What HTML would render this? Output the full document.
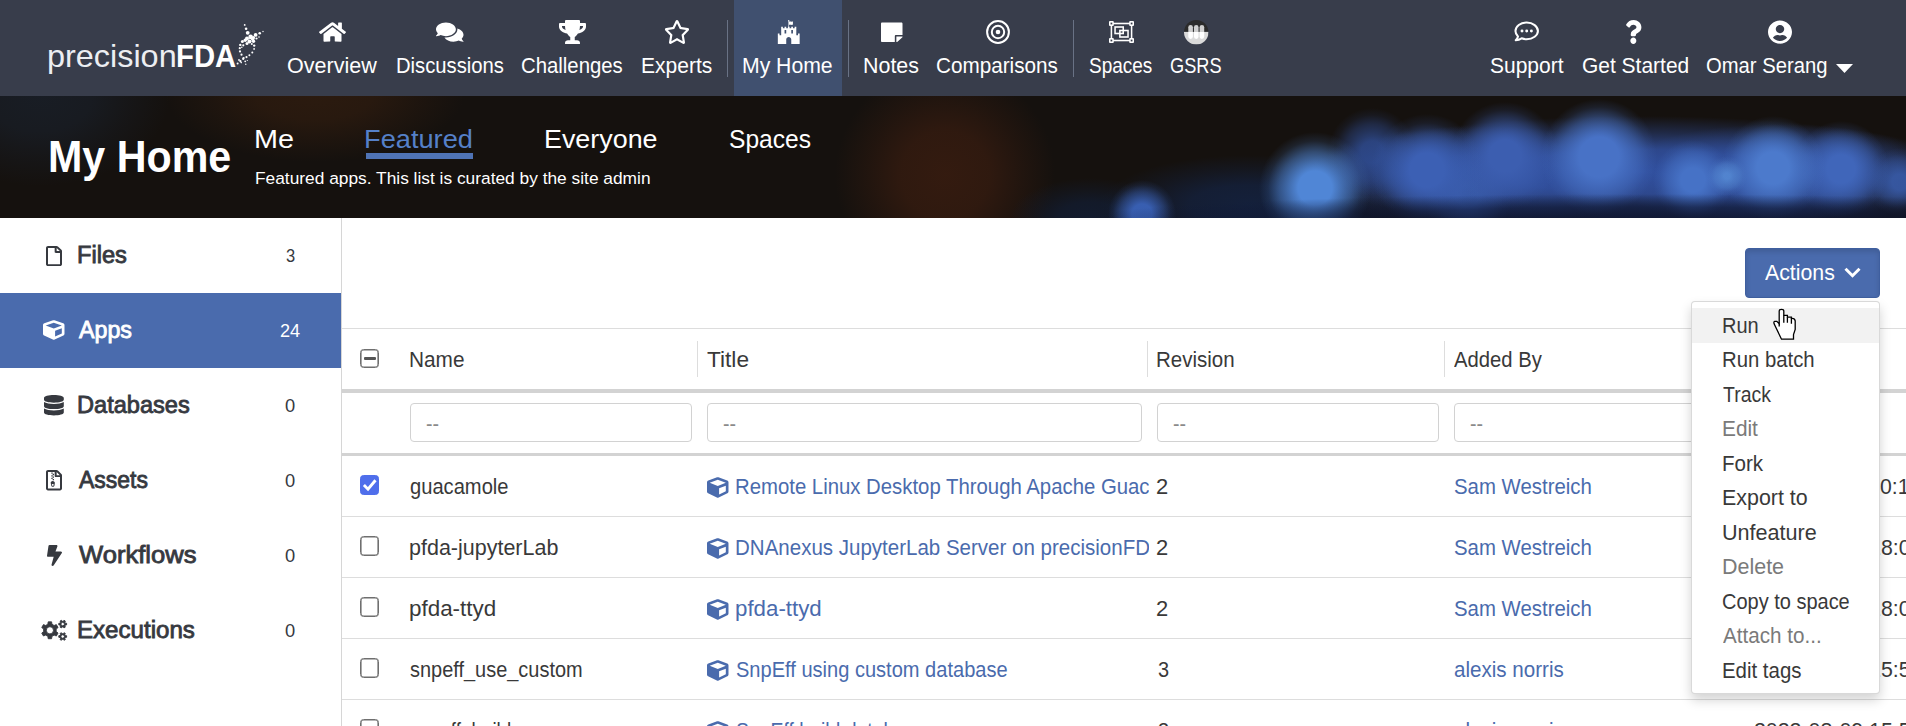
<!DOCTYPE html>
<html lang="en"><head><meta charset="utf-8"><title>My Home - precisionFDA</title>
<style>
html,body{margin:0;padding:0;}
body{width:1906px;height:726px;overflow:hidden;position:relative;background:#fff;font-family:"Liberation Sans", sans-serif;color:#393939;}
.t{position:absolute;white-space:pre;transform-origin:0 0;display:block;text-decoration:none;}
.i{position:absolute;fill:currentColor;display:block;overflow:visible;}
.abs{position:absolute;}
nav{position:absolute;left:0;top:0;width:1906px;height:96px;background:#383d4b;color:#fff;}
nav .t{color:#fff;}
nav .active{position:absolute;left:734px;top:0;width:108px;height:96px;background:#40506f;}
nav .sep{position:absolute;top:20px;width:1px;height:57px;background:#697285;}
header{position:absolute;left:0;top:96px;width:1906px;height:122px;overflow:hidden;background-color:#15110e;}
header .t{color:#fff;}
aside{position:absolute;left:0;top:218px;width:341px;height:508px;border-right:1px solid #d6d6d6;background:#fff;}
aside .cur{position:absolute;left:0;top:75px;width:341px;height:75px;background:#4a6bad;}
main{position:absolute;left:342px;top:218px;width:1564px;height:508px;background:#fff;overflow:hidden;}
.hl{position:absolute;left:0;width:1564px;background:#ddd;}
.inp{position:absolute;top:185px;height:37px;border:1px solid #d2d2d2;border-radius:4px;background:#fff;}
.vsep{position:absolute;top:123px;width:1px;height:36px;background:#ddd;}
.cb{position:absolute;left:18px;box-sizing:border-box;width:19.400px;height:19.400px;border:1px solid #6f6f6f;box-shadow:inset 0 0 0 .6px #6f6f6f;border-radius:3.500px;background:#fff;}
.btn{position:absolute;left:1403px;top:30px;width:133px;height:48px;border:1px solid #3f5f9f;border-radius:4px;background:#4a6bad;box-shadow:inset 0 3px 5px rgba(0,0,0,.125);}
.menu{position:absolute;left:1349px;top:83px;width:187px;height:391px;margin:0;padding:0;list-style:none;background:#fff;border:1px solid rgba(0,0,0,.15);border-radius:4px;box-shadow:0 6px 12px rgba(0,0,0,.175);}
.menu .hov{position:absolute;left:0;top:6px;width:187px;height:35px;background:#f2f2f2;}
</style></head><body>

<nav>
<div class="active"></div>
<div class="sep" style="left:727px"></div>
<div class="sep" style="left:848px"></div>
<div class="sep" style="left:1073px"></div>
<span class="t" style="left:46.74px;top:41.4px;font-size:30.5px;line-height:30.5px;transform:scaleX(1.0622);font-weight:400;color:#eceef2;">precision</span>
<span class="t" style="left:176.08px;top:41.4px;font-size:30.5px;line-height:30.5px;transform:scaleX(0.9595);font-weight:700;color:#fff;">FDA</span>
<svg class="i" style="left:230px;top:20px;width:40px;height:50px;color:#fff" viewBox="0 0 40 50"><circle cx="14.7" cy="4.9" r="0.9"/><circle cx="16.1" cy="8.7" r="1.3"/><circle cx="17.7" cy="12.8" r="1.9"/><circle cx="20.6" cy="16.9" r="2.3"/><circle cx="23.5" cy="21.2" r="1.7"/><circle cx="24.2" cy="25.6" r="1.2"/><circle cx="24.1" cy="28.9" r="0.9"/><circle cx="22.3" cy="32.6" r="1.0"/><circle cx="19.4" cy="35.3" r="1.0"/><circle cx="16.5" cy="37.1" r="1.1"/><circle cx="13.2" cy="38.9" r="1.1"/><circle cx="10.4" cy="41.2" r="1.1"/><circle cx="7.6" cy="43.4" r="1.0"/><circle cx="33.0" cy="11.5" r="0.7"/><circle cx="29.7" cy="13.2" r="1.3"/><circle cx="25.6" cy="14.9" r="1.9"/><circle cx="23.3" cy="17.7" r="1.8"/><circle cx="17.0" cy="18.4" r="2.0"/><circle cx="15.2" cy="20.3" r="1.7"/><circle cx="12.4" cy="21.6" r="1.5"/><circle cx="10.3" cy="24.9" r="1.2"/><circle cx="9.8" cy="28.2" r="1.1"/><circle cx="10.0" cy="31.4" r="1.1"/><circle cx="11.5" cy="34.7" r="1.1"/><circle cx="13.6" cy="38.0" r="1.1"/><circle cx="15.2" cy="41.3" r="0.9"/><circle cx="15.8" cy="44.3" r="0.7"/><circle cx="19.5" cy="21.5" r="2.0"/><circle cx="17.0" cy="23.5" r="1.5"/><circle cx="22.6" cy="19.2" r="1.6"/><circle cx="26.5" cy="18.5" r="1.1"/><circle cx="29.0" cy="17.0" r="0.8"/><circle cx="13.3" cy="25.3" r="1.1"/><circle cx="11.8" cy="27.3" r="0.8"/><circle cx="9.0" cy="40.0" r="0.9"/><circle cx="11.2" cy="42.6" r="0.8"/><circle cx="17.3" cy="40.5" r="0.6"/><circle cx="21.8" cy="24.0" r="1.0"/></svg>
<svg class="i" style="left:319px;top:21px;width:27px;height:22px;color:#fff;" viewBox="0 0 576 512" preserveAspectRatio="none"><path d="M280.37 148.26L96 300.11V464a16 16 0 0 0 16 16l112.06-.29a16 16 0 0 0 15.92-16V368a16 16 0 0 1 16-16h64a16 16 0 0 1 16 16v95.64a16 16 0 0 0 16 16.05L464 480a16 16 0 0 0 16-16V300L295.67 148.26a12.19 12.19 0 0 0-15.3 0zM571.6 251.47L488 182.56V44.05a12 12 0 0 0-12-12h-56a12 12 0 0 0-12 12v72.61L318.47 43a48 48 0 0 0-61 0L4.34 251.47a12 12 0 0 0-1.6 16.9l25.5 31A12 12 0 0 0 45.15 301l235.22-193.74a12.19 12.19 0 0 1 15.3 0L530.9 301a12 12 0 0 0 16.9-1.6l25.5-31a12 12 0 0 0-1.7-16.93z"/></svg>
<a class="t" style="left:287.39px;top:55.9px;font-size:21.3px;line-height:21.3px;transform:scaleX(1.0116);font-weight:400;color:#fff;">Overview</a>
<svg class="i" style="left:435.7px;top:21px;width:27.5px;height:22px;color:#fff;" viewBox="0 0 576 512" preserveAspectRatio="none"><path d="M416 192c0-88.4-93.1-160-208-160S0 103.6 0 192c0 34.3 14.1 65.9 38 92-13.4 30.2-35.5 54.2-35.8 54.5-2.2 2.3-2.8 5.7-1.5 8.700S4.800 352 8 352c36.600 0 66.900-12.300 88.700-25 32.200 15.700 70.300 25 111.300 25 114.900 0 208-71.600 208-160zm122 220c23.900-26 38-57.700 38-92 0-66.900-53.500-124.200-129.300-148.100.900 6.600 1.300 13.300 1.300 20.100 0 105.900-107.700 192-240 192-10.800 0-21.300-.800-31.700-1.900C207.800 439.600 281.800 480 368 480c41 0 79.100-9.200 111.300-25 21.800 12.700 52.100 25 88.700 25 3.200 0 6.100-1.900 7.300-4.800 1.300-2.900.700-6.300-1.500-8.700-.300-.300-22.400-24.200-35.800-54.500z"/></svg>
<a class="t" style="left:395.95px;top:55.9px;font-size:21.3px;line-height:21.3px;transform:scaleX(0.9503);font-weight:400;color:#fff;">Discussions</a>
<svg class="i" style="left:559px;top:20px;width:27px;height:24px;color:#fff;" viewBox="0 0 576 512" preserveAspectRatio="none"><path d="M552 64H448V24c0-13.300-10.700-24-24-24H152c-13.300 0-24 10.700-24 24v40H24C10.700 64 0 74.700 0 88v56c0 35.700 22.500 72.400 61.900 100.700 31.500 22.700 69.800 37.100 110 41.700C203.300 338.500 240 360 240 360v72h-48c-35.300 0-64 20.700-64 56v12c0 6.600 5.400 12 12 12h296c6.600 0 12-5.400 12-12v-12c0-35.300-28.700-56-64-56h-48v-72s36.700-21.500 68.100-73.600c40.300-4.600 78.600-19 110-41.700 39.300-28.300 61.900-65 61.900-100.700V88c0-13.300-10.700-24-24-24zM99.300 192.800C74.900 175.200 64 155.600 64 144v-16h64.200c1 32.600 5.800 61.200 12.800 86.200-15.100-5.200-29.200-12.400-41.700-21.400zM512 144c0 16.100-17.700 36.100-35.300 48.800-12.500 9-26.700 16.200-41.800 21.400 7-25 11.800-53.600 12.800-86.200H512v16z"/></svg>
<a class="t" style="left:521.34px;top:55.9px;font-size:21.3px;line-height:21.3px;transform:scaleX(0.9551);font-weight:400;color:#fff;">Challenges</a>
<svg class="i" style="left:663.5px;top:20px;width:26px;height:24px;color:#fff;" viewBox="0 0 576 512" preserveAspectRatio="none"><path d="M528.1 171.500L382 150.200 316.700 17.800c-11.700-23.600-45.600-23.900-57.400 0L194 150.200 47.900 171.500c-26.200 3.800-36.700 36.100-17.700 54.600l105.700 103-25 145.500c-4.500 26.300 23.200 46 46.400 33.700L288 439.600l130.700 68.700c23.200 12.200 50.900-7.400 46.400-33.700l-25-145.500 105.700-103c19-18.500 8.500-50.800-17.700-54.600zM388.600 312.300l23.700 138.400L288 385.400l-124.300 65.300 23.700-138.400-100.600-98 139-20.200 62.200-126 62.200 126 139 20.200-100.600 98z"/></svg>
<a class="t" style="left:640.61px;top:55.9px;font-size:21.3px;line-height:21.3px;transform:scaleX(0.9865);font-weight:400;color:#fff;">Experts</a>
<svg class="i" style="left:776.5px;top:20px;width:23.5px;height:24px;color:#fff;" viewBox="0 0 512 512" preserveAspectRatio="none"><path d="M489.200 287.900h-27.400c-2.600 0-4.600 2-4.600 4.600v32h-36.600V146.200c0-2.600-2-4.600-4.600-4.600h-27.400c-2.600 0-4.600 2-4.600 4.600v32h-36.600v-32c0-2.600-2-4.600-4.600-4.600h-27.400c-2.600 0-4.600 2-4.600 4.600v32h-36.600v-32c0-6-8-4.600-11.700-4.600v-38c8.300-2 17.100-3.400 25.700-3.400 10.900 0 20.900 4.300 31.400 4.300 4.600 0 27.700-1.100 27.700-8v-60c0-2.600-2-4.600-4.600-4.600-5.100 0-15.100 4.300-24 4.300-9.700 0-20.900-4.300-32.600-4.300-8 0-16 1.100-23.700 2.900v-4.900c5.400-2.600 9.100-8.300 9.100-14.300 0-20.700-31.400-20.800-31.400 0 0 6 3.700 11.700 9.100 14.300v111.700c-3.700 0-11.700-1.400-11.700 4.600v32h-36.600v-32c0-2.600-2-4.600-4.600-4.600h-27.400c-2.600 0-4.600 2-4.600 4.600v32H128v-32c0-2.600-2-4.600-4.600-4.600H96c-2.600 0-4.600 2-4.600 4.600v178.300H54.800v-32c0-2.600-2-4.600-4.600-4.600H22.800c-2.600 0-4.600 2-4.600 4.600V512h182.900v-96c0-72.600 109.700-72.600 109.700 0v96h182.900V292.500c.1-2.600-1.900-4.600-4.500-4.600zm-288.100-4.500c0 2.600-2 4.600-4.600 4.600h-27.400c-2.600 0-4.600-2-4.600-4.600v-64c0-2.600 2-4.600 4.600-4.600h27.400c2.600 0 4.600 2 4.600 4.600v64zm146.400 0c0 2.600-2 4.600-4.600 4.600h-27.400c-2.600 0-4.600-2-4.600-4.600v-64c0-2.600 2-4.600 4.600-4.600h27.400c2.600 0 4.600 2 4.600 4.600v64z"/></svg>
<a class="t" style="left:742.41px;top:55.9px;font-size:21.3px;line-height:21.3px;transform:scaleX(0.9947);font-weight:400;color:#fff;">My Home</a>
<svg class="i" style="left:881px;top:21px;width:21.5px;height:22.5px;color:#fff;" viewBox="0 0 448 512" preserveAspectRatio="none"><path d="M312 320h136V56c0-13.300-10.700-24-24-24H24C10.700 32 0 42.700 0 56v400c0 13.300 10.700 24 24 24h264V344c0-13.200 10.800-24 24-24zm129 55l-98 98c-4.500 4.500-10.600 7-17 7h-6V352h128v6.100c0 6.300-2.500 12.400-7 16.900z"/></svg>
<a class="t" style="left:863.29px;top:55.9px;font-size:21.3px;line-height:21.3px;transform:scaleX(1.0058);font-weight:400;color:#fff;">Notes</a>
<svg class="i" style="left:985.5px;top:19.8px;width:24px;height:24px;color:#fff;" viewBox="0 0 24 24" preserveAspectRatio="none"><circle cx="12" cy="12" r="10.9" fill="none" stroke="currentColor" stroke-width="2"/><circle cx="12" cy="12" r="6.2" fill="none" stroke="currentColor" stroke-width="2"/><circle cx="12" cy="12" r="2.3"/></svg>
<a class="t" style="left:936.33px;top:55.9px;font-size:21.3px;line-height:21.3px;transform:scaleX(0.9716);font-weight:400;color:#fff;">Comparisons</a>
<svg class="i" style="left:1108.5px;top:21px;width:25px;height:22px;color:#fff;" viewBox="0 0 26 22" preserveAspectRatio="none"><g fill="none" stroke="currentColor" stroke-width="1.6"><rect x="2.5" y="2.5" width="21" height="17"/><rect x="6.3" y="6" width="8.5" height="6.5"/><rect x="11.3" y="9.500" width="8.500" height="6.500"/></g><g fill="currentColor"><rect x="0" y="0" width="5" height="5" rx="1"/><rect x="21" y="0" width="5" height="5" rx="1"/><rect x="0" y="17" width="5" height="5" rx="1"/><rect x="21" y="17" width="5" height="5" rx="1"/></g><g fill="#383d4b"><rect x="1.600" y="1.600" width="1.800" height="1.800"/><rect x="22.600" y="1.600" width="1.800" height="1.800"/><rect x="1.600" y="18.600" width="1.800" height="1.800"/><rect x="22.600" y="18.600" width="1.800" height="1.800"/></g></svg>
<a class="t" style="left:1089.30px;top:55.9px;font-size:21.3px;line-height:21.3px;transform:scaleX(0.8908);font-weight:400;color:#fff;">Spaces</a>
<svg class="i" style="left:1183.7px;top:19.7px;width:24.5px;height:24.5px;color:#fff;" viewBox="0 0 24.5 24.5" preserveAspectRatio="none"><defs><clipPath id="gc"><circle cx="12.25" cy="12.25" r="12.25"/></clipPath><clipPath id="gt"><rect x="0" y="0" width="24.5" height="11.9"/></clipPath><clipPath id="gb"><rect x="0" y="11.9" width="24.5" height="12.6"/></clipPath></defs><g clip-path="url(#gc)"><rect x="0" y="0" width="24.5" height="11.9" fill="#2b2b2b"/><rect x="0" y="11.9" width="24.5" height="12.6" fill="#dadada"/><g fill="#d0d0d0" clip-path="url(#gt)"><rect x="4.3" y="4.900" width="4.600" height="14" rx="2.300"/><rect x="9.950" y="4.900" width="4.600" height="14" rx="2.300"/><rect x="15.600" y="4.900" width="4.600" height="14" rx="2.300"/></g><g fill="#fff" clip-path="url(#gb)"><rect x="4.300" y="4.900" width="4.600" height="14" rx="2.300"/><rect x="9.950" y="4.900" width="4.600" height="14" rx="2.300"/><rect x="15.600" y="4.900" width="4.600" height="14" rx="2.300"/></g></g></svg>
<a class="t" style="left:1169.85px;top:55.9px;font-size:21.3px;line-height:21.3px;transform:scaleX(0.8538);font-weight:400;color:#fff;">GSRS</a>
<svg class="i" style="left:1514.3px;top:21.3px;width:25.4px;height:21.5px;color:#fff;" viewBox="0 0 26 22" preserveAspectRatio="none"><path d="M13 1.500C6.600 1.500 1.500 5.400 1.500 10.300c0 2.100 1 4 2.600 5.500-.4 1.600-1.400 3-2.300 3.900 2.300 0 4.500-.9 6-2 1.600.6 3.300.9 5.200.9 6.400 0 11.500-3.900 11.500-8.300S19.400 1.500 13 1.500z" fill="none" stroke="currentColor" stroke-width="2.100" stroke-linejoin="round"/><circle cx="8.200" cy="10.300" r="1.500"/><circle cx="13" cy="10.300" r="1.500"/><circle cx="17.800" cy="10.300" r="1.500"/></svg>
<a class="t" style="left:1490.40px;top:55.9px;font-size:21.3px;line-height:21.3px;transform:scaleX(0.9856);font-weight:400;color:#fff;">Support</a>
<svg class="i" style="left:1625.3px;top:20.4px;width:16.7px;height:24px;color:#fff;" viewBox="0 0 384 512" preserveAspectRatio="none"><path d="M202.021 0C122.202 0 70.503 32.703 29.914 91.026c-7.363 10.580-5.093 25.086 5.178 32.874l43.138 32.709c10.373 7.865 25.132 6.026 33.253-4.148 25.049-31.381 43.630-49.449 82.757-49.449 30.764 0 68.816 19.799 68.816 49.631 0 22.552-18.617 34.134-48.993 51.164-35.423 19.860-82.299 44.576-82.299 106.405V320c0 13.255 10.745 24 24 24h72.471c13.255 0 24-10.745 24-24v-5.773c0-42.860 125.268-44.645 125.268-160.627C377.504 66.256 286.902 0 202.021 0zM192 373.459c-38.196 0-69.271 31.075-69.271 69.271 0 38.195 31.075 69.270 69.271 69.270s69.271-31.075 69.271-69.271-31.075-69.270-69.271-69.270z"/></svg>
<a class="t" style="left:1581.92px;top:55.9px;font-size:21.3px;line-height:21.3px;transform:scaleX(0.9845);font-weight:400;color:#fff;">Get Started</a>
<svg class="i" style="left:1768px;top:20.4px;width:24px;height:24px;color:#fff;" viewBox="0 0 496 512" preserveAspectRatio="none"><path d="M248 8C111 8 0 119 0 256s111 248 248 248 248-111 248-248S385 8 248 8zm0 96c48.600 0 88 39.400 88 88s-39.400 88-88 88-88-39.400-88-88 39.400-88 88-88zm0 344c-58.700 0-111.300-26.600-146.500-68.200 18.800-35.400 55.600-59.800 98.500-59.800 2.400 0 4.800.400 7.100 1.100 13 4.200 26.600 6.900 40.900 6.900 14.300 0 28-2.700 40.900-6.900 2.300-.700 4.700-1.100 7.100-1.100 42.900 0 79.700 24.400 98.500 59.800C359.300 421.400 306.700 448 248 448z"/></svg>
<a class="t" style="left:1706.35px;top:55.9px;font-size:21.3px;line-height:21.3px;transform:scaleX(0.9501);font-weight:400;color:#fff;">Omar Serang</a>
<svg class="i" style="left:1836px;top:63.500px;width:17px;height:9px;color:#fff" viewBox="0 0 17 9"><path d="M0 0h17L8.500 9z"/></svg>
</nav>
<header>
<div class="abs" id="bokeh" style="left:0;top:0;width:1906px;height:122px;background:radial-gradient(ellipse 560px 26px at 1640px 124px, rgba(14,24,56,.75) 0, rgba(14,24,56,.6) 50%, rgba(14,24,56,0) 100%),radial-gradient(circle at 1727px 80px, rgba(88,142,216,0.8) 0, rgba(88,142,216,0.8) 3px, rgba(88,142,216,0.40) 12px, rgba(88,142,216,0.12) 16px, rgba(88,142,216,0) 20px),radial-gradient(circle at 1315px 92px, rgba(80,134,214,1) 0, rgba(80,134,214,1) 17px, rgba(80,134,214,0.50) 36px, rgba(80,134,214,0.15) 47px, rgba(80,134,214,0) 56px),radial-gradient(circle at 1599px 61px, rgba(72,114,198,1) 0, rgba(72,114,198,1) 20px, rgba(72,114,198,0.50) 39px, rgba(72,114,198,0.15) 50px, rgba(72,114,198,0) 58px),radial-gradient(circle at 1773px 72px, rgba(76,122,204,1) 0, rgba(76,122,204,1) 16px, rgba(76,122,204,0.50) 34px, rgba(76,122,204,0.15) 44px, rgba(76,122,204,0) 52px),radial-gradient(circle at 1693px 84px, rgba(70,114,198,1) 0, rgba(70,114,198,1) 12px, rgba(70,114,198,0.50) 26px, rgba(70,114,198,0.15) 34px, rgba(70,114,198,0) 40px),radial-gradient(circle at 1841px 73px, rgba(64,102,186,1) 0, rgba(64,102,186,1) 14px, rgba(64,102,186,0.50) 31px, rgba(64,102,186,0.15) 41px, rgba(64,102,186,0) 48px),radial-gradient(circle at 1900px 86px, rgba(56,90,166,0.9) 0, rgba(56,90,166,0.9) 8px, rgba(56,90,166,0.45) 21px, rgba(56,90,166,0.14) 28px, rgba(56,90,166,0) 34px),radial-gradient(circle at 1427px 74px, rgba(60,96,180,1) 0, rgba(60,96,180,1) 17px, rgba(60,96,180,0.50) 36px, rgba(60,96,180,0.15) 47px, rgba(60,96,180,0) 56px),radial-gradient(circle at 1505px 60px, rgba(60,94,176,1) 0, rgba(60,94,176,1) 16px, rgba(60,94,176,0.50) 35px, rgba(60,94,176,0.15) 46px, rgba(60,94,176,0) 54px),radial-gradient(circle at 1468px 100px, rgba(56,90,168,0.9) 0, rgba(56,90,168,0.9) 11px, rgba(56,90,168,0.45) 28px, rgba(56,90,168,0.14) 37px, rgba(56,90,168,0) 44px),radial-gradient(circle at 1372px 56px, rgba(48,78,150,0.8) 0, rgba(48,78,150,0.8) 11px, rgba(48,78,150,0.40) 28px, rgba(48,78,150,0.12) 37px, rgba(48,78,150,0) 44px),radial-gradient(circle at 1142px 118px, rgba(58,98,184,0.95) 0, rgba(58,98,184,0.95) 10px, rgba(58,98,184,0.47) 22px, rgba(58,98,184,0.14) 29px, rgba(58,98,184,0) 34px),radial-gradient(ellipse 330px 56px at 1640px 76px, rgba(50,82,164,0.95) 0, rgba(50,82,164,0.81) 40%, rgba(50,82,164,0.38) 70%, rgba(50,82,164,0) 100%),radial-gradient(ellipse 180px 50px at 1480px 80px, rgba(48,80,160,0.8) 0, rgba(48,80,160,0.68) 40%, rgba(48,80,160,0.32) 70%, rgba(48,80,160,0) 100%),radial-gradient(ellipse 170px 52px at 1780px 80px, rgba(52,86,170,0.8) 0, rgba(52,86,170,0.68) 40%, rgba(52,86,170,0.32) 70%, rgba(52,86,170,0) 100%),radial-gradient(ellipse 150px 50px at 1250px 109px, rgba(20,34,64,0.9) 0, rgba(20,34,64,0.77) 40%, rgba(20,34,64,0.36) 70%, rgba(20,34,64,0) 100%),radial-gradient(ellipse 80px 40px at 1090px 122px, rgba(18,30,54,0.8) 0, rgba(18,30,54,0.68) 40%, rgba(18,30,54,0.32) 70%, rgba(18,30,54,0) 100%),radial-gradient(ellipse 110px 110px at 945px 79px, rgba(62,30,16,0.75) 0, rgba(62,30,16,0.64) 40%, rgba(62,30,16,0.30) 70%, rgba(62,30,16,0) 100%),radial-gradient(ellipse 130px 90px at 40px 0px, rgba(26,34,46,0.7) 0, rgba(26,34,46,0.59) 40%, rgba(26,34,46,0.28) 70%, rgba(26,34,46,0) 100%),radial-gradient(ellipse 150px 70px at 315px -4px, rgba(66,36,16,0.5) 0, rgba(66,36,16,0.42) 40%, rgba(66,36,16,0.20) 70%, rgba(66,36,16,0) 100%);"></div>
<h1 class="t" style="left:48.01px;top:40.4px;font-size:43.6px;line-height:43.6px;transform:scaleX(0.9457);font-weight:700;color:#fff;margin:0;">My Home</h1>
<a class="t" style="left:254.13px;top:30.3px;font-size:26.6px;line-height:26.6px;transform:scaleX(1.0834);font-weight:400;color:#fff;">Me</a>
<a class="t" style="left:364.35px;top:30.3px;font-size:26.6px;line-height:26.6px;transform:scaleX(1.0236);font-weight:400;color:#5580c8;">Featured</a>
<div class="abs" style="left:366px;top:57px;width:107px;height:6px;background:#4f73b5"></div>
<a class="t" style="left:543.88px;top:30.3px;font-size:26.6px;line-height:26.6px;transform:scaleX(1.0104);font-weight:400;color:#fff;">Everyone</a>
<a class="t" style="left:728.68px;top:30.3px;font-size:26.6px;line-height:26.6px;transform:scaleX(0.9244);font-weight:400;color:#fff;">Spaces</a>
<span class="t" style="left:254.99px;top:74.4px;font-size:17.2px;line-height:17.2px;transform:scaleX(1.0082);font-weight:400;color:#fff;">Featured apps. This list is curated by the site admin</span>
</header>
<aside>
<div class="cur"></div>
<svg class="i" style="left:46px;top:27.5px;width:16px;height:20px;color:#36393f;" viewBox="0 0 384 512" preserveAspectRatio="none"><path d="M369.900 97.900L286 14C277 5 264.800-.1 252.100-.1H48C21.500 0 0 21.500 0 48v416c0 26.500 21.500 48 48 48h288c26.500 0 48-21.500 48-48V131.900c0-12.700-5.100-25-14.100-34zM332.100 128H256V51.900l76.100 76.100zM48 464V48h160v104c0 13.300 10.700 24 24 24h104v288H48z"/></svg>
<a class="t" style="left:77.36px;top:24.9px;font-size:24.4px;line-height:24.4px;transform:scaleX(0.9695);font-weight:400;color:#36393f;-webkit-text-stroke:0.85px currentColor;">Files</a>
<span class="t" style="left:285.60px;top:30.0px;font-size:17.8px;line-height:17.8px;transform:scaleX(0.9300);font-weight:400;color:#36393f;">3</span>
<svg class="i" style="left:43.2px;top:102px;width:21.5px;height:20px;color:#fff;" viewBox="0 0 512 512" preserveAspectRatio="none"><path d="M239.100 6.300l-208 78c-18.700 7-31.100 25-31.100 45v225.100c0 18.200 10.300 34.800 26.500 42.900l208 104c13.500 6.800 29.400 6.800 42.900 0l208-104c16.300-8.100 26.500-24.800 26.500-42.900V129.300c0-20-12.400-37.900-31.100-44.900l-208-78C262 2.200 250 2.200 239.100 6.300zM256 68.400l192 72v1.100l-192 78-192-78v-1.100l192-72zm32 356V275.500l160-65v133.900l-160 80z"/></svg>
<a class="t" style="left:79.30px;top:99.9px;font-size:24.4px;line-height:24.4px;transform:scaleX(0.9531);font-weight:400;color:#fff;-webkit-text-stroke:0.85px currentColor;">Apps</a>
<span class="t" style="left:280.10px;top:105.0px;font-size:17.8px;line-height:17.8px;transform:scaleX(1.0207);font-weight:400;color:#fff;">24</span>
<svg class="i" style="left:43.8px;top:177px;width:19.8px;height:20.5px;color:#36393f;" viewBox="0 0 448 512" preserveAspectRatio="none"><path d="M448 73.143v45.714C448 159.143 347.667 192 224 192S0 159.143 0 118.857V73.143C0 32.857 100.333 0 224 0s224 32.857 224 73.143zM448 176v102.857C448 319.143 347.667 352 224 352S0 319.143 0 278.857V176c48.125 33.143 136.208 48.572 224 48.572S399.874 209.143 448 176zm0 160v102.857C448 479.143 347.667 512 224 512S0 479.143 0 438.857V336c48.125 33.143 136.208 48.572 224 48.572S399.874 369.143 448 336z"/></svg>
<a class="t" style="left:77.37px;top:174.9px;font-size:24.4px;line-height:24.4px;transform:scaleX(0.9667);font-weight:400;color:#36393f;-webkit-text-stroke:0.85px currentColor;">Databases</a>
<span class="t" style="left:285.00px;top:180.0px;font-size:17.8px;line-height:17.8px;transform:scaleX(1.0300);font-weight:400;color:#36393f;">0</span>
<svg class="i" style="left:46px;top:252px;width:16px;height:20.5px;color:#36393f;" viewBox="0 0 384 512" preserveAspectRatio="none"><path d="M369.900 97.900L286 14C277 5 264.800-.1 252.100-.1H48C21.500 0 0 21.500 0 48v416c0 26.500 21.500 48 48 48h288c26.500 0 48-21.500 48-48V131.900c0-12.700-5.100-25-14.100-34zM332.100 128H256V51.900l76.100 76.100zM48 464V48h160v104c0 13.300 10.700 24 24 24h104v288H48z"/><path d="M128 64h32v32h-32zM160 96h32v32h-32zM128 128h32v32h-32zM160 160h32v32h-32zM128 192h32v32h-32zM160 224h32v32h-32z"/><path d="M160 272c-30 0-52 26-46 55l10 60c4 20 20 33 40 33s36-13 40-33l8-60c5-29-20-55-52-55zm2 120c-13 0-24-9-24-20s11-20 24-20 24 9 24 20-11 20-24 20z"/></svg>
<a class="t" style="left:79.30px;top:249.9px;font-size:24.4px;line-height:24.4px;transform:scaleX(0.9411);font-weight:400;color:#36393f;-webkit-text-stroke:0.85px currentColor;">Assets</a>
<span class="t" style="left:285.00px;top:255.0px;font-size:17.8px;line-height:17.8px;transform:scaleX(1.0300);font-weight:400;color:#36393f;">0</span>
<svg class="i" style="left:46.5px;top:327px;width:15px;height:21px;color:#36393f;" viewBox="0 0 320 512" preserveAspectRatio="none"><path d="M296 160H180.600l42.600-129.800C227.200 15 215.700 0 200 0H56C44 0 33.800 8.900 32.200 20.800l-32 240C-1.700 275.200 9.500 288 24 288h118.700L96.600 482.500c-3.600 15.200 8 29.500 23.300 29.500 8.400 0 16.400-4.400 20.800-12l176-304c9.300-15.900-2.200-36-20.700-36z"/></svg>
<a class="t" style="left:79.30px;top:324.9px;font-size:24.4px;line-height:24.4px;transform:scaleX(1.0480);font-weight:400;color:#36393f;-webkit-text-stroke:0.85px currentColor;">Workflows</a>
<span class="t" style="left:285.00px;top:330.0px;font-size:17.8px;line-height:17.8px;transform:scaleX(1.0300);font-weight:400;color:#36393f;">0</span>
<svg class="i" style="left:40.5px;top:402px;width:27px;height:20.5px;color:#36393f;" viewBox="0 0 27 20.5" preserveAspectRatio="none"><path fill-rule="evenodd" stroke="currentColor" stroke-width="0.9" stroke-linejoin="round" d="M6.86 4.23 L7.20 1.87 L10.60 1.87 L10.94 4.23 L13.13 5.50 L15.35 4.61 L17.05 7.56 L15.17 9.03 L15.17 11.57 L17.05 13.04 L15.35 15.99 L13.13 15.10 L10.94 16.37 L10.60 18.73 L7.20 18.73 L6.86 16.37 L4.67 15.10 L2.45 15.99 L0.75 13.04 L2.63 11.57 L2.63 9.03 L0.75 7.56 L2.45 4.61 L4.67 5.50Z M12.50 10.30 A3.6 3.6 0 1 0 5.30 10.30 A3.6 3.6 0 1 0 12.50 10.30Z M24.40 3.19 L25.62 3.31 L25.62 4.89 L24.40 5.01 L23.84 5.98 L24.35 7.10 L22.98 7.89 L22.26 6.89 L21.14 6.89 L20.42 7.89 L19.05 7.10 L19.56 5.98 L19.00 5.01 L17.78 4.89 L17.78 3.31 L19.00 3.19 L19.56 2.22 L19.05 1.10 L20.42 0.31 L21.14 1.31 L22.26 1.31 L22.98 0.31 L24.35 1.10 L23.84 2.22Z M23.45 4.10 A1.75 1.75 0 1 0 19.95 4.10 A1.75 1.75 0 1 0 23.45 4.10Z M24.40 15.59 L25.62 15.71 L25.62 17.29 L24.40 17.41 L23.84 18.38 L24.35 19.50 L22.98 20.29 L22.26 19.29 L21.14 19.29 L20.42 20.29 L19.05 19.50 L19.56 18.38 L19.00 17.41 L17.78 17.29 L17.78 15.71 L19.00 15.59 L19.56 14.62 L19.05 13.50 L20.42 12.71 L21.14 13.71 L22.26 13.71 L22.98 12.71 L24.35 13.50 L23.84 14.62Z M23.45 16.50 A1.75 1.75 0 1 0 19.95 16.50 A1.75 1.75 0 1 0 23.45 16.50Z"/></svg>
<a class="t" style="left:77.32px;top:399.9px;font-size:24.4px;line-height:24.4px;transform:scaleX(0.9879);font-weight:400;color:#36393f;-webkit-text-stroke:0.85px currentColor;">Executions</a>
<span class="t" style="left:285.00px;top:405.0px;font-size:17.8px;line-height:17.8px;transform:scaleX(1.0300);font-weight:400;color:#36393f;">0</span>
</aside>
<main>
<div class="hl" style="top:110px;height:1px"></div>
<div class="hl" style="top:171px;height:4px;background:#d3d3d3"></div>
<div class="hl" style="top:235px;height:3px;background:#d3d3d3"></div>
<div class="hl" style="top:298px;height:1px"></div>
<div class="hl" style="top:359px;height:1px"></div>
<div class="hl" style="top:420px;height:1px"></div>
<div class="hl" style="top:481px;height:1px"></div>
<div class="cb" style="top:130.5px;left:18px"><div class="abs" style="left:2.800px;top:7.200px;width:12px;height:3px;border-radius:1px;background:#555"></div></div>
<span class="t" style="left:67.32px;top:132.0px;font-size:21.3px;line-height:21.3px;transform:scaleX(0.9770);font-weight:400;">Name</span>
<span class="t" style="left:364.90px;top:132.0px;font-size:21.3px;line-height:21.3px;transform:scaleX(1.0648);font-weight:400;">Title</span>
<span class="t" style="left:814.44px;top:132.0px;font-size:21.3px;line-height:21.3px;transform:scaleX(0.9633);font-weight:400;">Revision</span>
<span class="t" style="left:1112.30px;top:132.0px;font-size:21.3px;line-height:21.3px;transform:scaleX(0.9503);font-weight:400;">Added By</span>
<div class="vsep" style="left:355.0px"></div>
<div class="vsep" style="left:805.0px"></div>
<div class="vsep" style="left:1102.0px"></div>
<div class="vsep" style="left:1402.0px"></div>
<div class="inp" style="left:68px;width:280px"></div>
<span class="t" style="left:83.80px;top:195.5px;font-size:21.3px;line-height:21.3px;transform:scaleX(0.9154);font-weight:400;color:#8a8a8a;">--</span>
<div class="inp" style="left:365px;width:433px"></div>
<span class="t" style="left:380.80px;top:195.5px;font-size:21.3px;line-height:21.3px;transform:scaleX(0.9154);font-weight:400;color:#8a8a8a;">--</span>
<div class="inp" style="left:815px;width:280px"></div>
<span class="t" style="left:830.80px;top:195.5px;font-size:21.3px;line-height:21.3px;transform:scaleX(0.9154);font-weight:400;color:#8a8a8a;">--</span>
<div class="inp" style="left:1112px;width:280px"></div>
<span class="t" style="left:1127.80px;top:195.5px;font-size:21.3px;line-height:21.3px;transform:scaleX(0.9154);font-weight:400;color:#8a8a8a;">--</span>
<div class="cb" style="top:257.2px;left:18px;border-color:#4f6eeb;box-shadow:none;background:#4f6eeb"><svg class="i" style="left:-1px;top:-1px;width:19.400px;height:19.400px" viewBox="0 0 19.400 19.400"><path d="M3.900 10.100l4.100 4.100L15.500 5.300" fill="none" stroke="#fff" stroke-width="2.900"/></svg></div>
<span class="t" style="left:68.00px;top:258.8px;font-size:21.3px;line-height:21.3px;transform:scaleX(0.9454);font-weight:400;">guacamole</span>
<svg class="i" style="left:364.79999999999995px;top:259px;width:21.5px;height:21px;color:#4a6bad;" viewBox="0 0 512 512" preserveAspectRatio="none"><path d="M239.100 6.300l-208 78c-18.700 7-31.100 25-31.100 45v225.100c0 18.200 10.300 34.800 26.500 42.900l208 104c13.500 6.800 29.400 6.800 42.900 0l208-104c16.300-8.100 26.500-24.800 26.500-42.900V129.300c0-20-12.400-37.900-31.100-44.900l-208-78C262 2.200 250 2.200 239.100 6.300zM256 68.400l192 72v1.100l-192 78-192-78v-1.100l192-72zm32 356V275.500l160-65v133.900l-160 80z"/></svg>
<div class="abs" style="left:388px;top:238px;width:419px;height:60px;overflow:hidden">
<a class="t" style="left:5.25px;top:20.8px;font-size:21.3px;line-height:21.3px;transform:scaleX(0.9549);font-weight:400;color:#4a6bad;">Remote Linux Desktop Through Apache Guac<span style="margin-left:4px">amole</span></a>
</div>
<span class="t" style="left:814.47px;top:258.8px;font-size:21.3px;line-height:21.3px;transform:scaleX(1.0300);font-weight:400;">2</span>
<a class="t" style="left:1112.30px;top:258.8px;font-size:21.3px;line-height:21.3px;transform:scaleX(0.9570);font-weight:400;color:#4a6bad;">Sam Westreich</a>
<span class="t" style="left:1412.01px;top:258.8px;font-size:21.3px;line-height:21.3px;transform:scaleX(0.9949);font-weight:400;">2022-09-07 20:14:33</span>
<div class="cb" style="top:318.20000000000005px;left:18px"></div>
<span class="t" style="left:66.99px;top:319.8px;font-size:21.3px;line-height:21.3px;transform:scaleX(1.0092);font-weight:400;">pfda-jupyterLab</span>
<svg class="i" style="left:364.79999999999995px;top:320px;width:21.5px;height:21px;color:#4a6bad;" viewBox="0 0 512 512" preserveAspectRatio="none"><path d="M239.100 6.300l-208 78c-18.700 7-31.100 25-31.100 45v225.100c0 18.200 10.300 34.800 26.500 42.900l208 104c13.500 6.800 29.400 6.800 42.900 0l208-104c16.300-8.100 26.500-24.800 26.500-42.900V129.300c0-20-12.400-37.900-31.100-44.900l-208-78C262 2.200 250 2.200 239.100 6.300zM256 68.400l192 72v1.100l-192 78-192-78v-1.100l192-72zm32 356V275.500l160-65v133.900l-160 80z"/></svg>
<div class="abs" style="left:388px;top:299px;width:419px;height:60px;overflow:hidden">
<a class="t" style="left:5.24px;top:20.8px;font-size:21.3px;line-height:21.3px;transform:scaleX(0.9632);font-weight:400;color:#4a6bad;">DNAnexus JupyterLab Server on precisionFD<span style="margin-left:4px">A</span></a>
</div>
<span class="t" style="left:814.47px;top:319.8px;font-size:21.3px;line-height:21.3px;transform:scaleX(1.0300);font-weight:400;">2</span>
<a class="t" style="left:1112.30px;top:319.8px;font-size:21.3px;line-height:21.3px;transform:scaleX(0.9570);font-weight:400;color:#4a6bad;">Sam Westreich</a>
<span class="t" style="left:1412.00px;top:319.8px;font-size:21.3px;line-height:21.3px;transform:scaleX(1.0022);font-weight:400;">2022-09-07 18:03:12</span>
<div class="cb" style="top:379.20000000000005px;left:18px"></div>
<span class="t" style="left:66.95px;top:380.8px;font-size:21.3px;line-height:21.3px;transform:scaleX(1.0515);font-weight:400;">pfda-ttyd</span>
<svg class="i" style="left:364.79999999999995px;top:381px;width:21.5px;height:21px;color:#4a6bad;" viewBox="0 0 512 512" preserveAspectRatio="none"><path d="M239.100 6.300l-208 78c-18.700 7-31.100 25-31.100 45v225.100c0 18.200 10.300 34.800 26.500 42.900l208 104c13.500 6.800 29.400 6.800 42.900 0l208-104c16.300-8.100 26.500-24.800 26.500-42.900V129.300c0-20-12.400-37.900-31.100-44.900l-208-78C262 2.200 250 2.200 239.100 6.300zM256 68.400l192 72v1.100l-192 78-192-78v-1.100l192-72zm32 356V275.500l160-65v133.900l-160 80z"/></svg>
<div class="abs" style="left:388px;top:360px;width:419px;height:60px;overflow:hidden">
<a class="t" style="left:5.15px;top:20.8px;font-size:21.3px;line-height:21.3px;transform:scaleX(1.0466);font-weight:400;color:#4a6bad;">pfda-ttyd</a>
</div>
<span class="t" style="left:814.47px;top:380.8px;font-size:21.3px;line-height:21.3px;transform:scaleX(1.0300);font-weight:400;">2</span>
<a class="t" style="left:1112.30px;top:380.8px;font-size:21.3px;line-height:21.3px;transform:scaleX(0.9570);font-weight:400;color:#4a6bad;">Sam Westreich</a>
<span class="t" style="left:1412.00px;top:380.8px;font-size:21.3px;line-height:21.3px;transform:scaleX(1.0022);font-weight:400;">2022-09-07 18:01:45</span>
<div class="cb" style="top:440.20000000000005px;left:18px"></div>
<span class="t" style="left:68.00px;top:441.8px;font-size:21.3px;line-height:21.3px;transform:scaleX(0.9370);font-weight:400;">snpeff_use_custom</span>
<svg class="i" style="left:364.79999999999995px;top:442px;width:21.5px;height:21px;color:#4a6bad;" viewBox="0 0 512 512" preserveAspectRatio="none"><path d="M239.100 6.300l-208 78c-18.700 7-31.100 25-31.100 45v225.100c0 18.200 10.300 34.800 26.500 42.900l208 104c13.500 6.800 29.400 6.800 42.900 0l208-104c16.300-8.100 26.500-24.800 26.500-42.900V129.300c0-20-12.400-37.900-31.100-44.900l-208-78C262 2.200 250 2.200 239.100 6.300zM256 68.400l192 72v1.100l-192 78-192-78v-1.100l192-72zm32 356V275.500l160-65v133.900l-160 80z"/></svg>
<div class="abs" style="left:388px;top:421px;width:419px;height:60px;overflow:hidden">
<a class="t" style="left:6.20px;top:20.8px;font-size:21.3px;line-height:21.3px;transform:scaleX(0.9415);font-weight:400;color:#4a6bad;">SnpEff using custom database</a>
</div>
<span class="t" style="left:815.50px;top:441.8px;font-size:21.3px;line-height:21.3px;transform:scaleX(0.9364);font-weight:400;">3</span>
<a class="t" style="left:1112.30px;top:441.8px;font-size:21.3px;line-height:21.3px;transform:scaleX(0.9666);font-weight:400;color:#4a6bad;">alexis norris</a>
<span class="t" style="left:1412.00px;top:441.8px;font-size:21.3px;line-height:21.3px;transform:scaleX(1.0022);font-weight:400;">2022-08-09 15:58:20</span>
<div class="cb" style="top:501.20000000000005px;left:18px"></div>
<span class="t" style="left:68.00px;top:502.8px;font-size:21.3px;line-height:21.3px;transform:scaleX(0.8845);font-weight:400;">snpeff_build</span>
<svg class="i" style="left:364.79999999999995px;top:503px;width:21.5px;height:21px;color:#4a6bad;" viewBox="0 0 512 512" preserveAspectRatio="none"><path d="M239.100 6.300l-208 78c-18.700 7-31.100 25-31.100 45v225.100c0 18.200 10.300 34.800 26.500 42.900l208 104c13.500 6.800 29.400 6.800 42.900 0l208-104c16.300-8.100 26.500-24.800 26.500-42.900V129.300c0-20-12.400-37.900-31.100-44.900l-208-78C262 2.200 250 2.200 239.100 6.300zM256 68.400l192 72v1.100l-192 78-192-78v-1.100l192-72zm32 356V275.500l160-65v133.900l-160 80z"/></svg>
<div class="abs" style="left:388px;top:482px;width:419px;height:60px;overflow:hidden">
<a class="t" style="left:6.20px;top:20.8px;font-size:21.3px;line-height:21.3px;transform:scaleX(0.9114);font-weight:400;color:#4a6bad;">SnpEff build database</a>
</div>
<span class="t" style="left:815.50px;top:502.8px;font-size:21.3px;line-height:21.3px;transform:scaleX(0.9364);font-weight:400;">3</span>
<a class="t" style="left:1112.30px;top:502.8px;font-size:21.3px;line-height:21.3px;transform:scaleX(0.9666);font-weight:400;color:#4a6bad;">alexis norris</a>
<span class="t" style="left:1412.00px;top:502.8px;font-size:21.3px;line-height:21.3px;transform:scaleX(1.0022);font-weight:400;">2022-08-09 15:52:41</span>
<div class="btn"></div>
<span class="t" style="left:1422.60px;top:45.4px;font-size:21.3px;line-height:21.3px;transform:scaleX(1.0001);font-weight:400;color:#fff;">Actions</span>
<svg class="i" style="left:1501.5px;top:48.80000000000001px;width:17px;height:11.500px" viewBox="0 0 17 11.500"><path d="M1.500 1.700l7 7 7-7" fill="none" stroke="#fff" stroke-width="3"/></svg>
<ul class="menu"><li class="hov"></li>
<li class="t" style="left:30.26px;top:13.5px;font-size:21.3px;line-height:21.3px;transform:scaleX(0.9402);font-weight:400;color:#393939;">Run</li>
<li class="t" style="left:30.25px;top:48.0px;font-size:21.3px;line-height:21.3px;transform:scaleX(0.9544);font-weight:400;color:#393939;">Run batch</li>
<li class="t" style="left:31.20px;top:82.6px;font-size:21.3px;line-height:21.3px;transform:scaleX(0.9128);font-weight:400;color:#393939;">Track</li>
<li class="t" style="left:30.22px;top:117.1px;font-size:21.3px;line-height:21.3px;transform:scaleX(0.9782);font-weight:400;color:#7a7a7a;">Edit</li>
<li class="t" style="left:30.23px;top:151.7px;font-size:21.3px;line-height:21.3px;transform:scaleX(0.9655);font-weight:400;color:#393939;">Fork</li>
<li class="t" style="left:30.20px;top:186.2px;font-size:21.3px;line-height:21.3px;transform:scaleX(1.0050);font-weight:400;color:#393939;">Export to</li>
<li class="t" style="left:30.19px;top:220.8px;font-size:21.3px;line-height:21.3px;transform:scaleX(1.0133);font-weight:400;color:#393939;">Unfeature</li>
<li class="t" style="left:30.19px;top:255.3px;font-size:21.3px;line-height:21.3px;transform:scaleX(1.0081);font-weight:400;color:#7a7a7a;">Delete</li>
<li class="t" style="left:30.26px;top:289.9px;font-size:21.3px;line-height:21.3px;transform:scaleX(0.9382);font-weight:400;color:#393939;">Copy to space</li>
<li class="t" style="left:31.20px;top:324.4px;font-size:21.3px;line-height:21.3px;transform:scaleX(0.9691);font-weight:400;color:#7a7a7a;">Attach to...</li>
<li class="t" style="left:30.24px;top:359.0px;font-size:21.3px;line-height:21.3px;transform:scaleX(0.9591);font-weight:400;color:#393939;">Edit tags</li>
</ul>
<svg class="i" style="left:1426px;top:86px;width:36px;height:40px" viewBox="0 0 36 40"><path d="M11.200 7L11.200 19.800L8.800 17.400L6.600 17.400Q5.500 17.600 6.100 19.800L13.500 35.200L25.500 35.200L25.500 30.500L27.200 25.500L27.200 16.800Q26.800 14.400 24.200 14.300L23.400 14.300L23.400 13.200L19.400 13.200L19.400 11.400L15.800 11.400L15.800 7Q15.800 5.400 13.500 5.400Q11.200 5.400 11.200 7Z" fill="#fff" stroke="#000" stroke-width="1.300" stroke-linejoin="miter"/><path d="M11.200 19.500V22.500M15.800 11.400V18.700M19.400 13.200V18.700M23.400 14.300V19.700" stroke="#000" stroke-width="1.300" fill="none"/></svg>
</main>
</body></html>
